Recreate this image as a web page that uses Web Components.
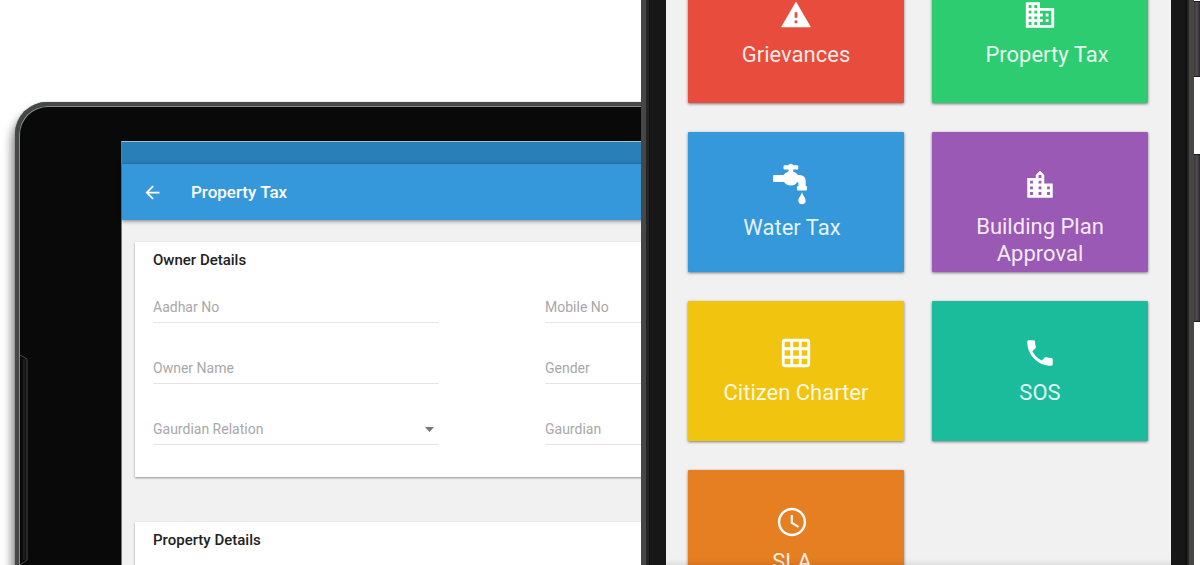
<!DOCTYPE html>
<html lang="en">
<head>
<meta charset="utf-8">
<title>Citizen services</title>
<style>
  html, body { margin: 0; height: 100%; }
  body { background: #fff; font-family: Roboto, "Liberation Sans", sans-serif; overflow: hidden; }
</style>
</head>
<body>
<device-stage>
  <tablet-device slot="tablet">
    <app-bar slot="bar">Property Tax</app-bar>
    <form-card heading="Owner Details">
      <form-field label="Aadhar No"></form-field>
      <form-field label="Mobile No"></form-field>
      <form-field label="Owner Name"></form-field>
      <form-field label="Gender"></form-field>
      <form-field label="Gaurdian Relation" kind="select"></form-field>
      <form-field label="Gaurdian"></form-field>
    </form-card>
    <form-card heading="Property Details"></form-card>
  </tablet-device>
  <phone-device slot="phone">
    <service-tile color="#e74c3c" label="Grievances">
      <svg width="34" height="34" viewBox="-0.5 -0.5 25 25" fill="#fff"><path d="M1 21h22L12 2 1 21zm12-3h-2v-2h2v2zm0-4h-2v-4h2v4z"/></svg>
    </service-tile>
    <service-tile color="#2ecc71" label="Property Tax" lean="end">
      <svg width="34" height="34" viewBox="0 0 24 24" fill="#fff"><path d="M12 7V3H2v18h20V7H12zM6 19H4v-2h2v2zm0-4H4v-2h2v2zm0-4H4V9h2v2zm0-4H4V5h2v2zm4 12H8v-2h2v2zm0-4H8v-2h2v2zm0-4H8V9h2v2zm0-4H8V5h2v2zm10 12h-8v-2h2v-2h-2v-2h2v-2h-2V9h8v10zm-2-8h-2v2h2v-2zm0 4h-2v2h2v-2z"/></svg>
    </service-tile>
    <service-tile color="#3498db" label="Water Tax" lean="start">
      <svg width="40" height="42" viewBox="0 0 40 42" fill="#fff"><path d="M2 12H11.500Q13 9.500 16.500 8.500V6.500H12.500Q11.500 6.500 11.500 5.500V3.500Q11.500 2.300 12.500 2.300H16.300Q16.500 .8 18.800 .8T21.300 2.300H25.300Q26.300 2.300 26.300 3.500V5.500Q26.300 6.500 25.300 6.500H21.200V8.500Q24.500 9.500 26 12H27.500Q33.700 12 33.700 18.500V23H34Q35 23 35 24V26.500Q35 27.500 34 27.500H26Q25 27.500 25 26.500V24Q25 23 26.500 22.500V20.500Q26.500 19 25.500 19Q23 22.500 18.800 22.500T12 19H2Q1 19 1 18V13Q1 12 2 12Z"/><path d="M30 29C31 33 33.600 34.500 33.600 37.500A3.600 3.800 0 0 1 26.400 37.500C26.400 34.500 29 33 30 29Z"/></svg>
    </service-tile>
    <service-tile color="#9b59b6" label="Building Plan Approval" long>
      <svg width="34" height="34" viewBox="0 0 24 24" fill="#fff"><path d="M15 11V5l-3-3-3 3v2H3v14h18V11h-6zm-8 8H5v-2h2v2zm0-4H5v-2h2v2zm0-4H5V9h2v2zm6 8h-2v-2h2v2zm0-4h-2v-2h2v2zm0-4h-2V9h2v2zm0-4h-2V5h2v2zm6 12h-2v-2h2v2zm0-4h-2v-2h2v2z"/></svg>
    </service-tile>
    <service-tile color="#f1c40f" label="Citizen Charter">
      <svg width="34" height="34" viewBox="0 0 24 24" fill="#fff"><path d="M20 2H4c-1.100 0-2 .9-2 2v16c0 1.100.9 2 2 2h16c1.100 0 2-.9 2-2V4c0-1.100-.9-2-2-2zM8 20H4v-4h4v4zm0-6H4v-4h4v4zm0-6H4V4h4v4zm6 12h-4v-4h4v4zm0-6h-4v-4h4v4zm0-6h-4V4h4v4zm6 12h-4v-4h4v4zm0-6h-4v-4h4v4zm0-6h-4V4h4v4z"/></svg>
    </service-tile>
    <service-tile color="#1abc9c" label="SOS">
      <svg width="34" height="34" viewBox="0 0 24 24" fill="#fff"><path d="M6.620 10.790c1.440 2.830 3.760 5.140 6.590 6.590l2.200-2.200c.27-.27.67-.36 1.020-.24 1.120.37 2.330.57 3.570.57.55 0 1 .45 1 1V20c0 .55-.45 1-1 1-9.390 0-17-7.610-17-17 0-.55.45-1 1-1h3.500c.55 0 1 .45 1 1 0 1.250.2 2.450.57 3.570.11.35.03.74-.25 1.020l-2.200 2.200z"/></svg>
    </service-tile>
    <service-tile color="#e67e22" label="SLA" lean="start">
      <svg width="34" height="34" viewBox="0 0 24 24" fill="#fff"><path d="M11.990 2C6.470 2 2 6.480 2 12s4.470 10 9.990 10C17.520 22 22 17.520 22 12S17.520 2 11.990 2zM12 20.300c-4.600 0-8.300-3.700-8.300-8.300S7.400 3.700 12 3.700s8.300 3.700 8.300 8.300-3.700 8.300-8.300 8.300zM12.600 7H11.100v6l5.100 3.100 .8-1.300-4.400-2.600z"/></svg>
    </service-tile>
  </phone-device>
</device-stage>

<script>
const define = (name, html, setup) => {
  const template = document.createElement('template');
  template.innerHTML = html;
  customElements.define(name, class extends HTMLElement {
    connectedCallback() {
      if (this.shadowRoot) return;
      const root = this.attachShadow({ mode: 'open' });
      root.append(template.content.cloneNode(true));
      if (setup) setup(this, root);
    }
  });
};

define('device-stage', `
  <style>
    :host { display: grid; grid-template-columns: minmax(0, 641fr) minmax(0, 553fr) 6px; height: 100vh; overflow: hidden; }
    .keys { display: grid; grid-template-rows: 76px 168px; row-gap: 77px; align-content: start; padding-top: 1px; }
    .keys i { background: linear-gradient(90deg, #3a3638, #514c50 50%, #2a2628); border-block: 1px solid #1c1a1b; box-sizing: border-box; }
  </style>
  <slot name="tablet"></slot>
  <slot name="phone"></slot>
  <div class="keys"><i></i><i></i></div>`);

define('tablet-device', `
  <style>
    :host { display: block; overflow: hidden; min-width: 0; }
    .body {
      position: relative; box-sizing: border-box; min-height: 100%;
      margin: 102px -221px 0 15px; padding: 35px 0 0 102px;
      background: #090909; border: solid #464848; border-width: 4px 0 0 4px; border-radius: 32px 0 0 0;
      box-shadow: inset 1px 1px 0 #868888, 0 0 1px #555, -3px 8px 10px rgba(0,0,0,.5);
    }
    .rocker { position: absolute; left: 0; top: 248px; }
    .screen { border-top: 1px solid #9fc0d5; border-left: 1px solid #777; background: #f1f1f1; min-height: 600px; }
    .status { height: 22px; background: #2980b9; }
    .content { display: grid; gap: 45px; padding: 22px 13px; }
  </style>
  <div class="body">
    <svg class="rocker" width="10" height="212" viewBox="0 0 10 212" fill="none">
      <path d="M1 1L8 5V206L1 211" stroke="#4a4a4a"/><path d="M5 5V206" stroke="#1b1b1b" stroke-width="3"/>
    </svg>
    <div class="screen">
      <div class="status"></div>
      <slot name="bar"></slot>
      <div class="content"><slot></slot></div>
    </div>
  </div>`);

define('app-bar', `
  <style>
    :host { display: flex; align-items: center; gap: 28px; height: 56px; padding-left: 20px; background: #3498db; color: #fff; box-shadow: 0 1px 4px rgba(0,0,0,.5); }
    button { display: flex; padding: 0; border: 0; background: none; color: inherit; }
    h1 { margin: 0; font-size: 17px; line-height: 24px; font-weight: 500; }
  </style>
  <button type="button" aria-label="Back"><svg width="21" height="21" viewBox="0 0 24 24" fill="#fff"><path d="M20 11H7.830l5.590-5.590L12 4l-8 8 8 8 1.410-1.410L7.830 13H20v-2z"/></svg></button>
  <h1><slot></slot></h1>`);

define('form-card', `
  <style>
    :host { display: block; padding: 8px 18px 32px; background: #fff; box-shadow: 0 1px 2px rgba(0,0,0,.4); }
    h2 { margin: 0 0 17px; font-size: 15px; line-height: 20px; font-weight: 500; color: #222; }
    .fields { display: grid; grid-template-columns: 1fr 1fr; gap: 25px 106px; }
  </style>
  <h2></h2>
  <div class="fields"><slot></slot></div>`,
  (host, root) => { root.querySelector('h2').textContent = host.getAttribute('heading'); });

define('form-field', `
  <style>
    :host { display: grid; grid-template-columns: 1fr auto; align-items: center; box-sizing: border-box; height: 36px; padding: 10px 0 5px; border-bottom: 1px solid #e4e4e4; font-size: 14px; line-height: 20px; color: #a8a8a8; }
    label { grid-area: 1 / 1; pointer-events: none; z-index: 1; }
    input, select { grid-area: 1 / 1 / 2 / 3; width: 100%; height: 20px; box-sizing: border-box; margin: 0; padding: 0; border: 0; outline: 0; background: none; font: inherit; color: #222; appearance: none; }
    svg { grid-area: 1 / 2; margin-right: 5px; pointer-events: none; }
  </style>
  <label for="control"></label>`,
  (host, root) => {
    const select = host.getAttribute('kind') === 'select';
    root.querySelector('label').textContent = host.getAttribute('label');
    const control = document.createElement(select ? 'select' : 'input');
    control.id = 'control';
    root.append(control);
    if (select) root.append(document.createRange().createContextualFragment(
      '<svg width="9" height="5" viewBox="0 0 9 5" fill="#777"><path d="M0 0h9L4.500 5z"/></svg>'));
  });

define('phone-device', `
  <style>
    :host { display: block; position: relative; min-width: 0; box-sizing: border-box; height: 100vh; border: solid #464644; border-width: 0 5px; background: #171717; padding: 0 18px 0 20px;
      box-shadow: inset 3px 0 #242424, inset 4px 0 #0e0e0e, inset -2px 0 #262624, inset -3px 0 #0c0c0c; }
    .screen { height: 100%; overflow: hidden; box-sizing: border-box; background: #f1f1f1; padding: 0 23px 0 22px; }
    .tiles { display: grid; grid-template-columns: 1fr 1fr; grid-auto-rows: 140px; gap: 29px 28px; margin-top: -37px; }
    .fade { position: absolute; left: 20px; right: 18px; bottom: 0; height: 6px; background: linear-gradient(transparent, rgba(0,0,0,.08)); }
  </style>
  <div class="screen"><div class="tiles"><slot></slot></div></div>
  <div class="fade"></div>`);

define('service-tile', `
  <style>
    :host { display: block; border-radius: 1px; box-shadow: 0 1px 3px rgba(0,0,0,.5); }
    button { display: flex; flex-direction: column; align-items: center; justify-content: center; gap: 9px; box-sizing: border-box; width: 100%; height: 100%; padding: 0 0 1px; border: 0; background: none; color: rgba(255,255,255,.9); font: 22px/27px Roboto, "Liberation Sans", sans-serif; }
    :host([lean="start"]) button { padding-right: 8px; }
    :host([lean="end"]) span { padding-left: 14px; }
    :host([long]) button { justify-content: flex-start; gap: 11px; padding: 36px 24px 0; }
  </style>
  <button type="button"><slot></slot><span></span></button>`,
  (host, root) => {
    host.style.backgroundColor = host.getAttribute('color');
    root.querySelector('span').textContent = host.getAttribute('label');
  });
</script>
</body>
</html>
